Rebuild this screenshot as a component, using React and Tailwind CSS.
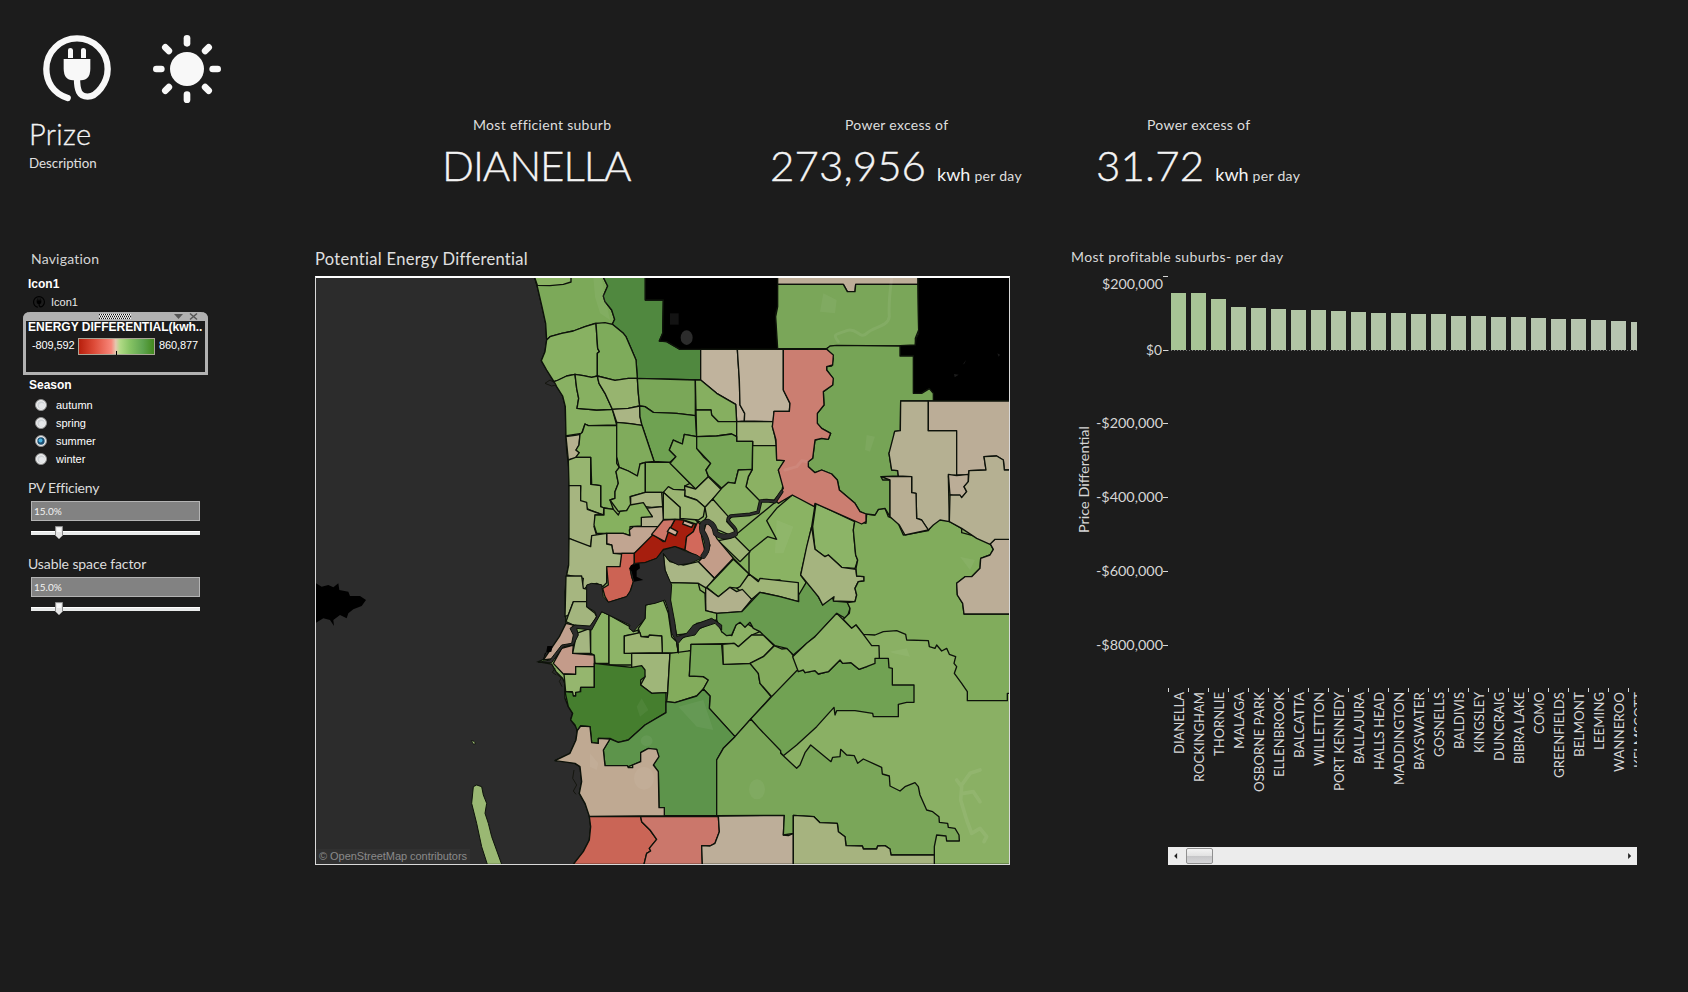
import React from "react";

const LATO = "font-['Lato','Open_Sans',sans-serif]";
const ARIAL = "font-['Liberation_Sans',Arial,sans-serif]";

/* Map geometry is stored at 3 units per pixel, in rows that share a vertical offset. */
const COAST =
  "14,22 22,50 36,110 47,160 50,210 45,245 34,272 50,300 72,335 80,350 98,378 106,410 108,500 110,540 117,600 118,700 117,800 116,885 110,915 105,965 106,1010 108,1060 102,1075 88,1110 64,1135 48,1165 25,1175 65,1182 78,1205 98,1225 104,1240 105,1285 115,1310 128,1330 122,1348 130,1360 142,1375 138,1410 120,1450 75,1472 100,1473 135,1480 150,1490 155,1535 148,1570 165,1600 178,1635 182,1670 178,1710 160,1745 130,1783 1440,1783 1440,22";

const NORTH = [
  ["#7ca959", "14,22 22,50 36,110 47,160 50,210 60,200 95,190 130,183 165,170 195,160 247,163 254,148 245,120 225,95 220,78 233,48 220,22"],
  ["#8ab363", "14,22 22,46 60,47 100,43 123,36 123,22"],
  ["#50883f", "220,22 233,48 220,78 225,95 245,120 254,148 247,163 280,190 288,200 303,235 318,270 322,325 512,330 512,238 450,238 410,215 388,213 398,190 400,90 346,90 346,22"],
  ["#000000", "346,22 346,90 400,90 398,190 388,213 410,215 450,238 743,238 737,130 743,110 743,22"],
  ["#88b162", "50,210 60,200 95,190 130,183 165,170 198,160 203,235 208,245 202,250 202,318 185,322 160,317 135,313 110,318 85,330 72,335 50,300 34,272 45,245"],
  ["#7eab5b", "198,160 225,158 247,163 280,190 288,200 303,235 318,270 322,325 295,325 255,331 202,318 202,250 208,245 203,235"],
  ["#89b163", "72,335 85,330 110,318 135,313 140,355 146,385 141,415 200,420 247,418 260,465 175,467 165,462 155,490 110,497 108,500 106,410 98,378 80,350"],
  ["#87b061", "135,313 160,317 185,322 202,318 207,340 225,370 247,418 200,420 141,415 146,385 140,355"],
  ["#97b46f", "202,318 255,331 295,325 322,325 325,370 329,408 295,415 247,418 225,370 207,340"],
  ["#aab584", "247,418 295,415 329,408 330,440 336,466 300,461 260,457"],
  ["#7aa758", "322,325 496,330 496,437 440,430 370,427 345,410 329,408 325,370"],
  ["#6fa252", "329,408 345,410 370,427 440,430 496,437 500,500 463,493 457,522 440,515 430,510 418,540 438,560 420,577 372,574 336,466 330,440"],
  ["#c0b39d", "512,238 622,238 628,330 630,405 644,430 643,453 620,455 617,403 560,370 512,330"],
  ["#c0b39d", "622,238 760,238 760,360 780,400 778,424 732,424 730,455 643,453 644,430 630,405 628,330"],
  ["#86af60", "496,330 512,330 560,370 617,403 620,455 565,455 545,435 543,420 498,420"],
  ["#86af60", "498,420 543,420 545,435 565,455 620,455 620,500 605,492 560,498 500,500"],
  ["#a3b57c", "620,455 730,455 727,470 735,500 739,527 668,527 668,514 620,514"],
  ["#b5b08f", "108,500 140,495 150,493 147,525 138,540 148,548 137,565 115,570"],
  ["#84ae5f", "165,462 175,467 260,467 260,580 268,592 258,605 265,640 255,665 255,685 240,690 250,718 222,714 212,710 212,647 185,643 182,562 137,562 148,548 138,540 147,525 150,493 157,487"],
  ["#80ab5c", "260,457 300,461 336,466 372,574 346,577 330,582 328,605 322,618 295,603 268,592 260,560"],
  ["#97b570", "115,570 137,562 182,562 182,643 212,647 212,710 222,714 220,735 175,718 150,692 152,647 117,647"],
  ["#a6b580", "117,647 152,647 152,692 170,697 172,718 220,735 195,735 200,765 192,770 200,797 185,805 182,830 160,825 117,805"],
  ["#8bb365", "268,592 295,603 322,618 330,582 346,577 346,667 300,680 302,705 290,722 265,724 240,690 255,685 255,665 265,640 258,605"],
  ["#82ac5d", "346,577 420,577 480,640 464,648 464,660 400,667 346,667"],
  ["#7daa5a", "463,493 500,500 500,535 520,560 542,580 528,600 535,620 497,657 420,580 438,560 418,540 430,510 440,515 457,522"],
  ["#77a657", "500,500 560,498 605,492 620,500 620,514 668,514 667,598 625,600 615,640 595,637 575,655 535,618 528,600 542,580 500,535"],
  ["#a0b678", "464,648 497,657 535,620 575,660 525,712 500,690 464,678"],
  ["#8bb163", "668,527 739,527 740,570 764,572 745,600 760,640 755,665 733,690 690,693 670,680 648,650 655,620 667,598"],
  ["#88b062", "575,655 595,637 615,640 625,600 667,598 655,620 648,650 690,693 685,725 660,733 605,740 590,755 548,687"],
  ["#9bb573", "400,667 415,650 430,658 465,660 464,678 500,690 525,712 520,740 505,750 450,745 450,712"],
  ["#9fb577", "400,667 450,712 450,748 400,748"],
  ["#a0b578", "525,712 548,687 595,740 590,755 618,785 600,805 565,808 560,780 540,752 515,765 530,740"],
  ["#a8b582", "302,680 346,667 395,667 398,710 365,712 302,705"],
  ["#b3b08e", "346,740 367,740 345,715 398,710 400,750 392,770 334,772 334,742"],
  ["#86b15f", "195,735 222,735 222,714 250,718 265,735 270,724 290,722 300,705 340,698 367,740 334,742 334,768 300,770 300,797 280,790 200,790 192,765"],
  ["#c1a591", "230,790 280,790 300,797 298,780 310,770 392,770 370,800 314,850 250,850 245,825 230,822"],
  ["#a7b682", "117,805 182,830 185,797 230,790 230,822 245,825 250,850 275,852 275,890 230,895 230,938 218,950 200,940 175,945 165,955 155,960 160,925 110,915 116,885"],
];

/* Offset 690 units down. */
const CENTRE = [
  ["#85b05f", "497,60 610,110 750,-5 855,20 845,85 812,225 806,250 690,235 657,222 610,175"],
  ["#8ab363", "787,-15 855,15 845,80 812,225 830,250 806,290 750,240 690,245 657,222 657,155 713,110 740,118 710,62 740,25"],
  ["#9fb577", "565,122 600,115 615,110 660,155 630,185"],
  ["#c39d89", "530,65 545,80 560,115 610,175 553,235 505,185 535,155 540,135 520,100"],
  ["#a9b685", "400,160 420,185 460,195 505,185 553,235 530,265 505,250 420,248 405,210"],
  ["#8bb365", "610,178 657,222 630,265 600,262 565,290 530,262"],
  ["#9fb577", "657,222 685,245 690,235 805,248 805,305 750,290 690,277 665,298 620,265 630,260"],
  ["#b1b18c", "527,262 565,290 600,262 620,275 637,268 665,298 635,335 560,340 527,332"],
  ["#a6b680", "108,228 155,228 160,265 172,268 170,305 130,305 115,345 105,350"],
  ["#a3b57e", "130,305 170,305 170,320 195,340 200,350 180,385 130,375 108,365 115,345"],
  ["#c1a18e", "108,370 130,375 125,385 140,400 130,435 95,445 75,475 40,480 88,410"],
  ["#c49b8a", "95,445 130,435 128,460 193,465 193,500 137,500 137,523 100,522 70,490"],
  ["#95b66e", "137,500 193,500 193,562 152,562 150,578 138,578 137,588 127,588 127,575 107,575 102,522 137,523"],
  ["#a5b681", "140,400 180,385 182,460 128,460"],
  ["#8bb365", "215,335 237,345 237,490 195,490 193,465 182,460 182,385"],
  ["#8db467", "237,345 300,380 310,395 325,390 325,402 283,408 283,460 305,460 305,495 237,495"],
  ["#8cb365", "347,315 400,300 415,340 425,410 440,425 445,460 397,458 395,408 333,410 325,385 345,355"],
  ["#9db674", "283,408 330,398 333,410 355,412 358,405 395,408 397,458 283,460"],
  ["#86af60", "420,248 505,250 510,270 525,280 527,332 560,340 560,360 500,370 480,400 440,405 425,340 420,300"],
  ["#8cb265", "445,460 440,425 480,400 560,360 580,375 575,395 605,407 620,370 650,370 690,395 665,405 625,440 612,430 483,433 483,450 460,462"],
  ["#9fb679", "305,460 420,460 413,578 365,580 332,555 345,530 335,505 305,503"],
  ["#83ac5c", "420,460 483,452 478,528 520,530 535,540 520,567 500,588 435,608 410,605 413,578"],
  ["#cc6354", "275,160 313,160 313,190 300,205 305,230 310,245 300,275 290,290 235,307 225,290 218,265 235,255 230,200 270,200"],
  ["#a61e0e", "313,160 370,103 400,125 412,100 435,58 460,60 497,72 490,95 470,110 465,150 435,140 400,148 380,175 345,188 313,192"],
  ["#cd7668", "400,60 435,58 415,95 405,125 365,103"],
  ["#cdae98", "462,62 490,72 485,82 458,72"],
  ["#cdae98", "420,82 443,95 437,107 412,95"],
  ["#d2695b", "503,65 512,75 515,110 525,155 512,175 465,150 470,110 490,95"],
  ["#76a557", "483,433 575,433 580,493 660,490 685,520 690,550 723,590 615,710 538,625 540,588 520,567 535,540 520,530 478,528"],
  ["#90b368", "578,433 612,430 625,440 665,405 700,405 732,437 700,470 660,490 580,493"],
  ["#83ab5d", "660,490 700,470 733,437 755,447 775,445 790,468 800,490 805,515 725,590 690,550 685,520"],
  ["#689b4f", "560,340 635,335 690,277 750,290 806,305 806,285 830,245 865,290 878,315 905,290 912,303 955,307 960,325 950,357 920,340 860,405 790,465 770,445 735,437 700,405 690,395 670,385 660,367 645,382 630,367 618,375 605,405 590,407 575,395 560,360"],
];

/* Offset 690 right and 690 down. */
const EAST = [
  ["#8cb467", "168,10 284,65 280,90 287,165 293,180 285,205 245,202 205,165 195,170 165,148 158,80"],
  ["#a5b47f", "155,80 165,148 195,170 205,165 245,202 288,208 290,228 312,230 312,243 295,245 285,265 290,285 285,305 220,303 222,290 188,315 175,290 122,225 140,140"],
  ["#81ac5c", "285,60 318,70 320,42 345,45 355,28 375,25 385,50 410,60 430,105 505,92 525,60 545,58 570,65 605,85 605,98 650,110 690,130 700,148 690,165 662,175 660,205 635,230 615,230 590,250 592,285 608,310 612,342 750,342 750,580 742,580 742,602 622,602 622,575 605,550 583,520 590,500 582,490 587,470 568,463 560,445 545,453 530,435 525,445 508,440 505,422 440,420 437,403 410,392 370,395 345,405 310,403 288,375 275,385 250,358 268,340 270,325 262,308 285,305 290,285 285,265 295,245 312,243 312,230 290,228 288,205 293,180 287,165 280,90"],
  ["#bbad97", "750,118 705,118 690,130 700,148 690,165 662,175 660,205 635,230 615,230 590,250 592,285 608,310 612,342 750,342"],
  ["#71a253", "110,512 130,510 135,518 165,512 175,522 205,515 240,480 248,490 273,488 297,508 320,500 345,475 385,475 387,503 397,505 397,555 462,555 462,607 440,607 415,613 415,650 340,650 338,640 285,632 230,632 225,645 222,622 170,680 110,735 70,767 0,690 -28,657 35,590"],
  ["#8cb166", "230,340 275,385 288,375 310,403 335,437 357,437 358,475 345,475 345,490 320,500 297,508 273,488 248,490 240,480 205,515 175,522 165,512 135,518 130,510 115,515 98,470 140,430 165,410"],
];

/* Offset 690 right, none down. */
const NORTHEAST = [
  ["#bdad98", "53,22 474,22 474,43 287,43 285,65 262,65 250,43 53,43"],
  ["#7aa659", "53,43 250,43 262,65 285,65 287,43 474,43 476,180 466,205 466,227 235,228 205,233 200,236 53,236 47,140 53,110"],
  ["#000000", "474,22 750,22 750,393 520,393 520,370 508,356 480,372 460,370 460,258 420,258 420,227 466,225 468,205 476,190"],
  ["#76a456", "200,236 210,228 230,226 420,228 420,258 460,258 460,370 485,370 508,356 520,370 520,393 422,393 421,482 404,484 400,520 387,550 395,600 413,602 415,618 363,620 368,630 390,630 390,740 375,715 355,718 345,735 318,732 300,725 285,700 238,660 232,630 215,612 185,600 165,608 145,590 145,575 158,565 165,510 185,505 205,508 212,490 185,475 172,460 172,430 192,405 190,365 218,345 218,325 200,300 200,290 215,288 220,265"],
  ["#cb7e71", "70,238 200,238 220,255 218,285 200,290 200,300 220,325 218,345 190,365 192,405 172,430 172,460 185,475 212,490 205,508 185,505 165,510 158,565 145,575 145,590 165,608 185,600 215,612 232,630 238,660 285,700 300,725 318,732 318,755 305,762 165,700 163,710 97,675 55,700 45,690 70,655 55,600 73,572 50,570 48,510 37,470 42,424 88,424 90,400 70,360"],
  ["#b5b092", "422,393 505,393 505,482 590,482 590,615 565,618 568,755 540,750 520,765 505,780 485,750 470,745 468,670 455,668 455,620 415,618 413,602 395,600 387,550 404,484 421,482"],
  ["#b8ae93", "363,620 455,620 455,668 468,670 470,745 485,750 505,780 435,795 418,765 390,740 390,630"],
  ["#bbad97", "505,393 750,393 750,600 733,600 730,570 710,558 672,560 678,600 627,602 625,615 590,615 590,482 505,482"],
  ["#bbad97", "565,613 590,617 625,613 625,635 612,650 620,665 605,683 570,675"],
  ["#b5b092", "570,675 600,675 605,683 620,665 612,650 625,635 627,602 678,600 672,560 710,558 730,570 733,600 750,600 750,808 705,808 690,823 650,805 605,775 568,755"],
];

/* Offset 1170 down. */
const SOUTH = [
  ["#457e2e", "193,10 238,15 305,22 335,17 345,30 345,50 332,60 332,75 365,100 408,98 408,158 345,195 295,240 265,247 240,235 205,235 205,250 185,248 180,200 152,198 142,212 135,195 122,180 128,160 115,140 105,95 128,97 130,108 137,108 137,97 152,95 152,82 193,82"],
  ["#5d944b", "408,125 435,128 500,108 520,87 540,108 538,145 615,230 580,265 560,300 560,467 403,467 403,443 387,443 385,335 370,315 385,290 380,268 350,268 332,278 332,305 295,320 225,317 220,270 240,237 265,247 295,240 345,195 408,158"],
  ["#bfa992", "152,198 180,200 185,248 205,250 205,235 240,237 220,270 225,317 292,317 295,323 308,323 308,315 332,305 332,278 355,265 380,268 387,290 370,315 385,335 387,443 403,443 403,467 178,469 165,430 148,400 155,365 150,320 135,310 75,302 120,280 138,240 142,212"],
  ["#ca6556", "178,470 332,470 335,485 360,510 380,538 358,565 362,573 350,580 342,613 130,613 160,575 178,540 182,500"],
  ["#cb776b", "332,470 565,470 568,515 555,550 540,558 515,557 517,613 342,613 350,580 362,573 358,565 380,538 360,510 335,485"],
  ["#bdae99", "565,468 763,466 760,525 775,527 790,520 790,613 517,613 515,557 540,558 555,550 568,515"],
  ["#7aa659", "560,300 580,265 615,230 662,177 690,208 752,272 752,280 800,325 810,315 825,278 842,255 903,305 908,292 930,290 932,268 950,285 973,287 983,310 1000,297 1055,322 1057,342 1078,348 1080,378 1110,393 1125,380 1155,368 1165,380 1170,405 1190,450 1208,455 1227,470 1228,487 1253,490 1255,502 1275,505 1287,525 1288,543 1250,543 1248,528 1220,525 1213,560 1213,585 1083,585 1080,567 1065,557 1043,558 1040,567 1000,567 997,558 948,557 945,530 925,515 922,490 870,488 852,470 790,466 790,520 760,525 763,466 560,467"],
  ["#a6b37f", "790,466 852,470 870,488 922,490 925,515 945,530 948,557 997,558 1000,567 1040,567 1043,558 1065,557 1080,567 1083,585 1213,585 1213,613 790,613"],
];

function Regions({ items, x = 0, y = 0 }) {
  return (
    <g transform={`translate(${x} ${y})`}>
      {items.map(([fill, pts], i) => (
        <polygon key={i} points={pts} fill={fill} stroke="#0d120a" strokeWidth="4" strokeLinejoin="round" />
      ))}
    </g>
  );
}

function SuburbMap() {
  return (
    <svg className="block h-full w-full" viewBox="-642 24 2079 1758" preserveAspectRatio="none">
      <rect x="-645" y="20" width="2090" height="1770" fill="#2c2c2c" />
      <polygon points={COAST} fill="#8ab064" stroke="#0d120a" strokeWidth="4" />
      <Regions items={NORTH} />
      <Regions items={CENTRE} y={690} />
      <Regions items={EAST} x={690} y={690} />
      <Regions items={NORTHEAST} x={690} />
      <Regions items={SOUTH} y={1170} />
      <g fill="none" strokeLinecap="round" strokeLinejoin="round">
        <path stroke="#0d120a" strokeWidth="17" d="M520 858Q545 828 517 785Q510 755 535 755Q555 765 557 790Q580 808 615 792" />
        <path stroke="#0d120a" strokeWidth="11" d="M615 792C630 770 575 755 602 738L660 733 684 727 692 693 710 692 735 695 755 665" />
        <path stroke="#2c2c2c" strokeWidth="13" d="M520 858Q545 828 517 785Q510 755 535 755Q555 765 557 790Q580 808 615 792" />
        <path stroke="#2c2c2c" strokeWidth="6" d="M615 792C630 770 575 755 602 738L660 733 684 727 692 693 710 692 735 695 755 665" />
      </g>
      <g transform="translate(0 690)">
        <path
          fill="#2c2c2c"
          stroke="#0d120a"
          strokeWidth="3"
          d="M170 255 185 250 215 254 220 290 235 307 290 290 302 272 310 245 305 230 300 205 313 190 345 188 380 175 400 150 435 140 470 155 500 165 515 175 480 190 445 195 415 180 400 160 405 210 425 255 422 300 435 370 440 410 470 400 490 375 545 355 575 375 575 390 555 370 510 385 495 405 460 412 445 430 445 460 440 425 425 400 415 330 405 300 375 310 347 315 345 355 310 395 297 385 300 375 215 335 185 390 140 385 145 405 130 435 100 440 65 488 25 487 60 480 95 435 125 430 130 405 120 385 135 375 180 378 200 350 195 335 170 320Z"
        />
        <path fill="#000" d="M303 195 328 190 330 205 320 212 320 230 340 240 312 245 305 215 298 205ZM52 438 68 438 64 455 45 458 38 482 48 460Z" />
      </g>
      <g fill="none" stroke="#15160f" strokeWidth="3">
        <path d="M75 1195l-8 12 12 8M80 1212l14 12-6 10 8 16M132 1500l-4 25 12 20-10 18 8 10" />
        <path fill="#2c2c2c" d="M45 340 60 330 72 337 78 345 65 348Z" />
        <path d="M1440 1450v-20" />
      </g>
      <rect x="420" y="130" width="26" height="34" fill="#131313" />
      <ellipse cx="470" cy="203" rx="18" ry="22" fill="#2c2c2c" />
      <path fill="#1c1c1c" d="M1308 270l-10 14 6-4ZM1272 312l14 2-12 8ZM1402 250l8 4-4 6Z" />
      <g fill="none" stroke="#fff" strokeOpacity=".07" strokeLinecap="round" strokeLinejoin="round">
        <path strokeWidth="9" d="M1085 24Q1075 100 1078 140C1075 170 1030 170 1010 190S980 170 950 182 905 190 925 215" />
        <path strokeWidth="9" d="M765 600L800 590 815 572 835 575" />
        <path strokeWidth="11" d="M1280 1530L1295 1550 1292 1590 1310 1650 1325 1690 1350 1675 1370 1700 1362 1715M1295 1545L1320 1510 1350 1500M1300 1570 1330 1565 1350 1595" />
      </g>
      <g fill="#fff" fillOpacity=".05">
        <ellipse cx="681" cy="1558" rx="24" ry="30" />
        <ellipse cx="342" cy="1525" rx="30" ry="34" />
        <ellipse cx="350" cy="1412" rx="18" ry="16" />
        <path d="M445 1310L520 1290 550 1380 500 1370ZM190 22L215 24 225 80 240 150 210 130 195 80ZM880 70L920 90 915 130 870 125ZM180 1450L205 1480 200 1500 180 1490ZM320 1310L335 1285 355 1320 330 1340ZM1080 1145L1130 1135 1140 1160 1090 1150ZM740 750L790 770 760 850 735 850ZM1010 495L1035 500 1020 545 1005 540ZM1290 860L1335 870 1320 900Z" />
      </g>
      <path fill="#9ab873" stroke="#0d120a" strokeWidth="3" d="M-170 1550L-160 1545-145 1550-140 1575-130 1600-135 1630-125 1660-115 1700-85 1783-128 1783-145 1730-160 1660-175 1600Z" />
      <path fill="#000" d="M-645 938L-625 950-605 945-590 952-575 940-572 960-545 965-540 978-510 978-492 990-505 1008-530 1018-545 1030-550 1045-570 1035-590 1050-588 1068-600 1050-620 1045-645 1060Z" />
      <path fill="#9ab873" stroke="#000" strokeWidth="2" d="M-176 1412l8 2 5 7-7 1Z" />
    </svg>
  );
}

function PlugIcon({ className, color }) {
  return (
    <svg className={className} viewBox="0 0 204 204">
      <path
        d="M74 189C30 175 10 140 10 102C10 50 52 10 102 10S194 50 194 102C194 145 160 185 134 185C108 185 102 165 102 130"
        fill="none"
        stroke={color}
        strokeWidth="19"
        strokeLinecap="round"
      />
      <path d="M62 72H142V100Q142 136 114 136H90Q62 136 62 100Z" fill={color} />
      <path d="M75 69V45Q75 39 82 39T90 45V69ZM114 69V45Q114 39 121 39T129 45V69Z" fill={color} />
    </svg>
  );
}

function SunIcon({ className }) {
  return (
    <svg className={className} viewBox="0 0 204 204">
      <circle cx="102" cy="102" r="51" fill="#f8f8f8" />
      {[0, 45, 90, 135, 180, 225, 270, 315].map((a) => (
        <rect key={a} x="92" y="0" width="20" height="35" rx="10" fill="#f8f8f8" transform={`rotate(${a} 102 102)`} />
      ))}
    </svg>
  );
}

function Slider({ label, labelClass }) {
  return (
    <div className="h-[76px]">
      <div className={`${LATO} ml-[28px] h-[20px] whitespace-nowrap text-[14px] leading-[20px] text-[#dcdcdc] ${labelClass}`}>{label}</div>
      <div className={`${LATO} ml-[31px] mt-[3px] h-5 w-[169px] border border-[#b4b4b4] bg-[#828282] pl-[2px] text-[10px] leading-[18px] text-[#f2f2f2]`}>
        15.0%
      </div>
      <svg className="ml-[31px] mt-[4px] block" width="169" height="15" viewBox="0 0 169 15">
        <rect y="6" width="169" height="4" fill="#e8eaea" />
        <rect y="6" width="169" height="1" fill="#ffffff" />
        <path d="M24.500 1.500H31.500V10.500L28 14L24.500 10.500Z" fill="#e4e4e4" stroke="#8b8b8b" />
        <path d="M26 3h4v4h-4Z" fill="#f8f8f8" />
      </svg>
    </div>
  );
}

function Radio({ label, checked }) {
  return (
    <div className="flex h-[18px] items-center">
      <svg className="ml-[35px]" width="12" height="12" viewBox="0 0 12 12">
        <circle cx="6" cy="6" r="5.500" fill="#f0f0f0" stroke="#8e8f8f" />
        <circle cx="6" cy="6" r="3.700" fill={checked ? "#1c4f72" : "#cfd3d6"} />
        <circle cx={checked ? 5.5 : 6.8} cy={checked ? 5.5 : 6.8} r={checked ? 2 : 2.8} fill={checked ? "#49b3e0" : "#e6e8ea"} />
      </svg>
      <span className={`${ARIAL} ml-[9px] text-[11px] leading-[18px] text-white`}>{label}</span>
    </div>
  );
}

const SUBURBS = ["DIANELLA", "ROCKINGHAM", "THORNLIE", "MALAGA", "OSBORNE PARK", "ELLENBROOK", "BALCATTA", "WILLETTON", "PORT KENNEDY", "BALLAJURA", "HALLS HEAD", "MADDINGTON", "BAYSWATER", "GOSNELLS", "BALDIVIS", "KINGSLEY", "DUNCRAIG", "BIBRA LAKE", "COMO", "GREENFIELDS", "BELMONT", "LEEMING", "WANNEROO", "KELMSCOTT"];
const LENGTHS = [62, 90, 64, 57, 100, 85, 66, 74, 99, 72, 78, 93, 78, 65, 57, 61, 69, 72, 42, 86, 65, 58, 80, 76];
const HEIGHTS = [57, 57, 51, 43, 42, 41, 40, 40, 39, 38, 37, 37, 36, 36, 34, 34, 33, 33, 32, 31, 31, 30, 29, 28];
const COLORS = ["#a7c495", "#a8c496", "#abc49a", "#b0c5a2", "#b0c5a3", "#b1c5a4", "#b1c5a5", "#b1c5a5", "#b2c5a6", "#b2c5a7", "#b2c5a7", "#b2c5a8", "#b3c5a8", "#b3c5a9", "#b4c5aa", "#b4c5aa", "#b4c5ab", "#b5c5ac", "#b5c5ad", "#b6c4ae", "#b6c4ae", "#b7c4af", "#b7c4b0", "#b8c4b0"];
const AXIS = [
  ["$200,000", 284, 276.5, 1102, 61],
  ["$0", 350, 350.5, 1146, 16],
  ["-$200,000", 423, 423.5, 1096, 67],
  ["-$400,000", 497, 497.5, 1096, 67],
  ["-$600,000", 571, 571.5, 1096, 67],
  ["-$800,000", 645, 645.5, 1096, 67],
];

function ProfitChart() {
  return (
    <svg className={`${LATO} block`} width="567" height="545" viewBox="1070 272 567 545" fill="#d6d6d6" fontSize="14">
      {AXIS.map(([t, y, tick, x, w]) => (
        <g key={t}>
          <text x={x} y={y + 5} textLength={w} lengthAdjust="spacingAndGlyphs">{t}</text>
          <rect x="1163" y={tick - 0.5} width="5" height="1" />
        </g>
      ))}
      <text transform="translate(1089 533) rotate(-90)" textLength="107" lengthAdjust="spacingAndGlyphs">Price Differential</text>
      <line x1="1168" x2="1637" y1="350.500" y2="350.500" stroke="#777" strokeDasharray="1 2" />
      {SUBURBS.map((s, i) => (
        <g key={s}>
          <rect x={1171 + 20 * i} y={350 - HEIGHTS[i]} width="15" height={HEIGHTS[i]} fill={COLORS[i]} />
          <rect x={1168 + 20 * i} y="688" width="1" height="4" />
          <text
            transform={`translate(${1183.5 + 20 * i} ${692 + LENGTHS[i]}) rotate(-90)`}
            textLength={LENGTHS[i]}
            lengthAdjust="spacingAndGlyphs"
          >
            {s}
          </text>
        </g>
      ))}
    </svg>
  );
}

function Kpi({ className, label, labelClass, value, valueClass, unit }) {
  return (
    <div className={`${LATO} ${className} whitespace-nowrap text-[#f4f4f4]`}>
      <div className={`h-[20px] text-[14px] leading-[20px] tracking-[0.3px] text-[#dedede] ${labelClass}`}>{label}</div>
      <div className="mt-[3px] flex h-[54px] items-baseline leading-[54px]">
        <span className={`text-[42px] font-light [-webkit-text-stroke:0.4px_#f4f4f4] ${valueClass}`}>{value}</span>
        {unit && <span className="ml-[11px] text-[18px]">kwh</span>}
        {unit && <span className="ml-[4px] text-[14px] tracking-[0.3px] text-[#dedede]">per day</span>}
      </div>
    </div>
  );
}

export default function App() {
  return (
    <div className="flex h-[992px] w-[1688px] overflow-hidden bg-[#1c1c1c]">
      <aside className="w-[315px] shrink-0">
        <div className="flex pl-[43px] pt-[35px]">
          <PlugIcon className="h-[68px] w-[68px]" color="#f8f8f8" />
          <SunIcon className="ml-[42px] h-[68px] w-[68px]" />
        </div>
        <div className={`${LATO} ml-[29px] mt-[11px] h-[40px] text-[29px] font-light leading-[40px] tracking-[0.3px] text-[#f4f4f4] [-webkit-text-stroke:0.3px_#f4f4f4]`}>Prize</div>
        <div className={`${LATO} ml-[29px] h-[18px] text-[13.300px] leading-[18px] text-[#e0e0e0]`}>Description</div>
        <div className={`${LATO} ml-[31px] mt-[77px] h-5 text-[14px] leading-5 tracking-[0.2px] text-[#d4d4d4]`}>Navigation</div>
        <div className={`${ARIAL} ml-[28px] mt-[7px] h-4 text-[12px] font-bold leading-4 text-white`}>Icon1</div>
        <div className="mt-[2px] flex h-[16px] items-center pl-[33px]">
          <PlugIcon className="h-3 w-3" color="#000000" />
          <span className={`${ARIAL} ml-[6px] text-[11px] text-[#e8e8e8]`}>Icon1</span>
        </div>
        <div className="ml-[23px] mt-[2px] h-[63px] w-[185px] rounded-t-[7px] border-[3px] border-t-0 border-[#b1b1b1] bg-[#1c1c1c]">
          <svg className="-ml-[3px] block" width="185" height="9" viewBox="0 0 185 9">
            <path d="M0 9V7Q0 0 7 0H178Q185 0 185 7V9Z" fill="#b1b1b1" />
            <path d="M76 2.500H108M76 4.500H108M76 6.500H108" stroke="#fff" />
            <path d="M76 2.500H108M77 4.500H108M76 6.500H108" stroke="#111" strokeDasharray="1 1" />
            <path d="M151 2H160L155.500 7Z" fill="#555" />
            <path d="M167 1.500L174 7.500M174 1.500L167 7.500" stroke="#555" strokeWidth="1.500" />
          </svg>
          <div className={`${ARIAL} ml-[2px] h-[15px] whitespace-nowrap text-[12px] font-bold leading-[13px] text-white`}>ENERGY DIFFERENTIAL(kwh..</div>
          <div className={`${ARIAL} mt-[2px] flex h-[18px] items-start text-[11px] leading-[14px] text-white`}>
            <span className="w-[52px] pl-[6px] tracking-[-0.1px]">-809,592</span>
            <div className="flex h-[17px] w-[77px] justify-center border border-[#a9a596] bg-[linear-gradient(90deg,#b71f0c_0%,#dd4b38_20%,#f8877a_43%,#e5c8b0_49%,#b0da85_55%,#86c364_68%,#5fa450_85%,#42891d_100%)]">
              <span className="mt-[12px] h-[4px] w-px bg-black" />
            </div>
            <span className="ml-[4px] tracking-[-0.1px]">860,877</span>
          </div>
        </div>
        <div className={`${ARIAL} ml-[29px] mt-[2px] h-[16px] text-[12px] font-bold leading-[16px] text-white`}>Season</div>
        <div className="mt-[3px]">
          <Radio label="autumn" />
          <Radio label="spring" />
          <Radio label="summer" checked />
          <Radio label="winter" />
        </div>
        <div className="mt-[10px]">
          <Slider label="PV Efficieny" labelClass="tracking-[-0.25px]" />
          <Slider label="Usable space factor" labelClass="tracking-[-0.1px]" />
        </div>
      </aside>

      <main className="min-w-0 flex-1">
        <div className="flex h-[247px] pt-[115px]">
          <Kpi className="ml-[128px] w-[328px]" label="Most efficient suburb" labelClass="pl-[30px]" value="DIANELLA" valueClass="-ml-px tracking-[-1px]" />
          <Kpi className="w-[325px]" label="Power excess of" labelClass="pl-[74px]" value="273,956" valueClass="-ml-px tracking-[0.1px]" unit />
          <Kpi className="" label="Power excess of" labelClass="pl-[51px]" value="31.72" valueClass="tracking-[0.2px]" unit />
        </div>
        <div className="flex">
          <section className="w-[695px]">
            <h2 className={`${LATO} h-[29px] whitespace-nowrap text-[16.500px] leading-[24px] tracking-[0.3px] text-[#e0e0e0]`}>Potential Energy Differential</h2>
            <div className="relative h-[589px] w-[695px] border border-t-2 border-[#d9d9d9] border-t-white">
              <SuburbMap />
              <div className={`${ARIAL} absolute bottom-0 left-0 bg-[#363636]/60 px-[3px] text-[11px] leading-[15px] tracking-[-0.05px] text-[#8a8a8a]`}>© OpenStreetMap contributors</div>
            </div>
          </section>
          <section className="ml-[60px]">
            <h2 className={`${LATO} h-[25px] whitespace-nowrap pl-px text-[14px] leading-[20px] tracking-[0.36px] text-[#d8d8d8]`}>Most profitable suburbs- per day</h2>
            <ProfitChart />
            <div className="ml-[98px] mt-[30px] flex h-[18px] w-[469px] items-center justify-between bg-[#ececec] px-[5px]">
              <div className="flex items-center">
                <svg className="ml-px" width="4" height="6" viewBox="0 0 5 8"><path d="M4 0V8L0 4Z" fill="#222" /></svg>
                <span className="ml-[8px] h-4 w-[27px] rounded-[2px] border border-[#8f8f8f] bg-[linear-gradient(#f3f3f3_0%,#e2e2e2_48%,#c6c6c8_52%,#d6d6d8_100%)]" />
              </div>
              <svg width="4" height="6" viewBox="0 0 5 8"><path d="M0 0V8L4 4Z" fill="#222" /></svg>
            </div>
          </section>
        </div>
      </main>
    </div>
  );
}
